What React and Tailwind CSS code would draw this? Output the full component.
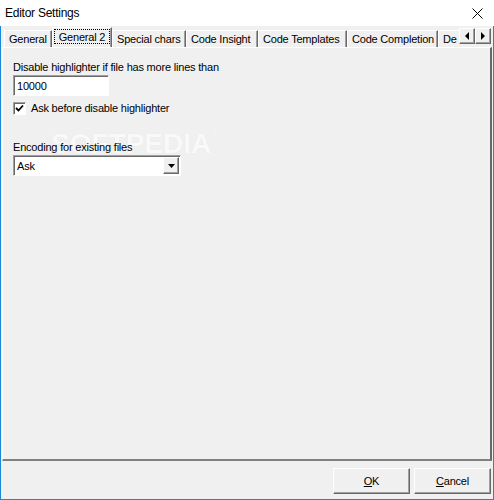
import React from 'react';

const tabs = [
  { label: 'General', w: 'w-[48px]' },
  { label: 'General 2', w: 'w-[60px]', active: true },
  { label: 'Special chars', w: 'w-[74px]' },
  { label: 'Code Insight', w: 'w-[72px]' },
  { label: 'Code Templates', w: 'w-[89px]' },
  { label: 'Code Completion', w: 'w-[91px]' },
  { label: 'De', w: 'w-[30px]' },
];

const raised =
  'border border-t-white border-l-white border-r-[#696969] border-b-[#696969] shadow-[inset_-1px_-1px_0_#a0a0a0]';
const sunken =
  'border border-t-[#a0a0a0] border-l-[#a0a0a0] border-r-white border-b-white shadow-[inset_1px_1px_0_#696969]';

const Tab = ({ label, w, active }) => {
  if (active) {
    return (
      <div className={`${w} h-[21px] mb-[-1px] relative z-10 shrink-0 bg-[#f0f0f0] border-t border-l border-white border-r border-r-[#696969] shadow-[inset_-1px_0_0_#a0a0a0] px-[1px] pt-[1px] pb-[4px]`}>
        <div className="h-full border border-dotted border-black flex items-center justify-center">{label}</div>
      </div>
    );
  }
  return (
    <div className={`${w} h-[17px] shrink-0 bg-[#f0f0f0] border-t border-l border-white border-r border-r-[#696969] shadow-[inset_-1px_0_0_#a0a0a0] flex items-center pl-[4px] whitespace-nowrap`}>
      {label}
    </div>
  );
};

const ArrowBtn = ({ dir }) => (
  <div className={`w-[16px] h-[16px] bg-[#f0f0f0] ${raised} flex items-center justify-center`}>
    <svg width="5" height="8" viewBox="0 0 5 8">
      {dir === 'left' ? <path d="M4 0 L0 4 L4 8 Z" fill="#000" /> : <path d="M0 0 L4 4 L0 8 Z" fill="#000" />}
    </svg>
  </div>
);

export default function App() {
  return (
    <div className="w-[494px] h-[500px] flex flex-col bg-[#f0f0f0] text-black font-['Liberation_Sans',Arial,sans-serif] text-[11px] tracking-[-0.2px] leading-[14px] overflow-hidden">
      {/* title bar */}
      <div className="h-[26px] shrink-0 bg-white flex items-center justify-between pl-[5px] pr-[11px]">
        <span className="text-[12px] tracking-[-0.25px]">Editor Settings</span>
        <svg width="11" height="11" viewBox="0 0 11 11">
          <path d="M0.5 0.5 L10.5 10.5 M10.5 0.5 L0.5 10.5" stroke="#000" strokeWidth="1" />
        </svg>
      </div>

      <div className="flex-1 flex flex-col border-x border-b border-[#1c87d9]">
        {/* tab strip */}
        <div className="h-[21px] shrink-0 flex items-end pl-[3px]">
          <div className="w-[455px] h-[22px] flex items-end overflow-hidden">
            {tabs.map(t => (
              <Tab key={t.label} {...t} />
            ))}
          </div>
          <div className="flex self-start mt-[2px]">
            <ArrowBtn dir="left" />
            <ArrowBtn dir="right" />
          </div>
        </div>

        {/* panel */}
        <div className="relative h-[414px] shrink-0 mx-[1px] border-t border-l border-white border-r-2 border-b-2 border-r-[#696969] border-b-[#808080] pl-[10px] pt-[12px]">
          {/* watermark */}
          <div className="absolute left-[48px] top-[89px] text-[28px] font-bold tracking-[0px] text-[#f9f9f9] [text-shadow:0_0_1px_#e2e2e2] pointer-events-none select-none">
            SOFTPEDIA<sup className="text-[9px] font-normal align-top">®</sup>
          </div>

          <div className="relative">
            <div>Disable highlighter if file has more lines than</div>
            <div className={`mt-[1px] w-[96px] h-[21px] bg-white ${sunken} flex items-center pl-[3px]`}>10000</div>
            <div className="mt-[5px] flex items-center gap-[5px]">
              <div className={`w-[13px] h-[13px] bg-white ${sunken} flex items-center justify-center`}>
                <svg width="9" height="9" viewBox="0 0 9 9">
                  <path d="M1 4 L3.5 6.5 L8 1.5" stroke="#000" strokeWidth="1.8" fill="none" />
                </svg>
              </div>
              <span>Ask before disable highlighter</span>
            </div>
            <div className="mt-[25px]">Encoding for existing files</div>
            <div className={`mt-[1px] w-[168px] h-[21px] bg-white ${sunken} flex items-center justify-between pl-[3px] pr-[1px]`}>
              <span>Ask</span>
              <div className={`w-[16px] h-[17px] bg-[#f0f0f0] ${raised} flex items-center justify-center`}>
                <svg width="7" height="4" viewBox="0 0 7 4">
                  <path d="M0 0 L7 0 L3.5 4 Z" fill="#000" />
                </svg>
              </div>
            </div>
          </div>
        </div>

        {/* buttons */}
        <div className="flex-1 flex justify-end items-start gap-[4px] pt-[7px] pr-[2px]">
          <button className={`w-[77px] h-[26px] bg-[#f0f0f0] ${raised} flex items-center justify-center`}>
            <span><span className="underline">O</span>K</span>
          </button>
          <button className={`w-[77px] h-[26px] bg-[#f0f0f0] ${raised} flex items-center justify-center`}>
            <span><span className="underline">C</span>ancel</span>
          </button>
        </div>
      </div>
    </div>
  );
}
